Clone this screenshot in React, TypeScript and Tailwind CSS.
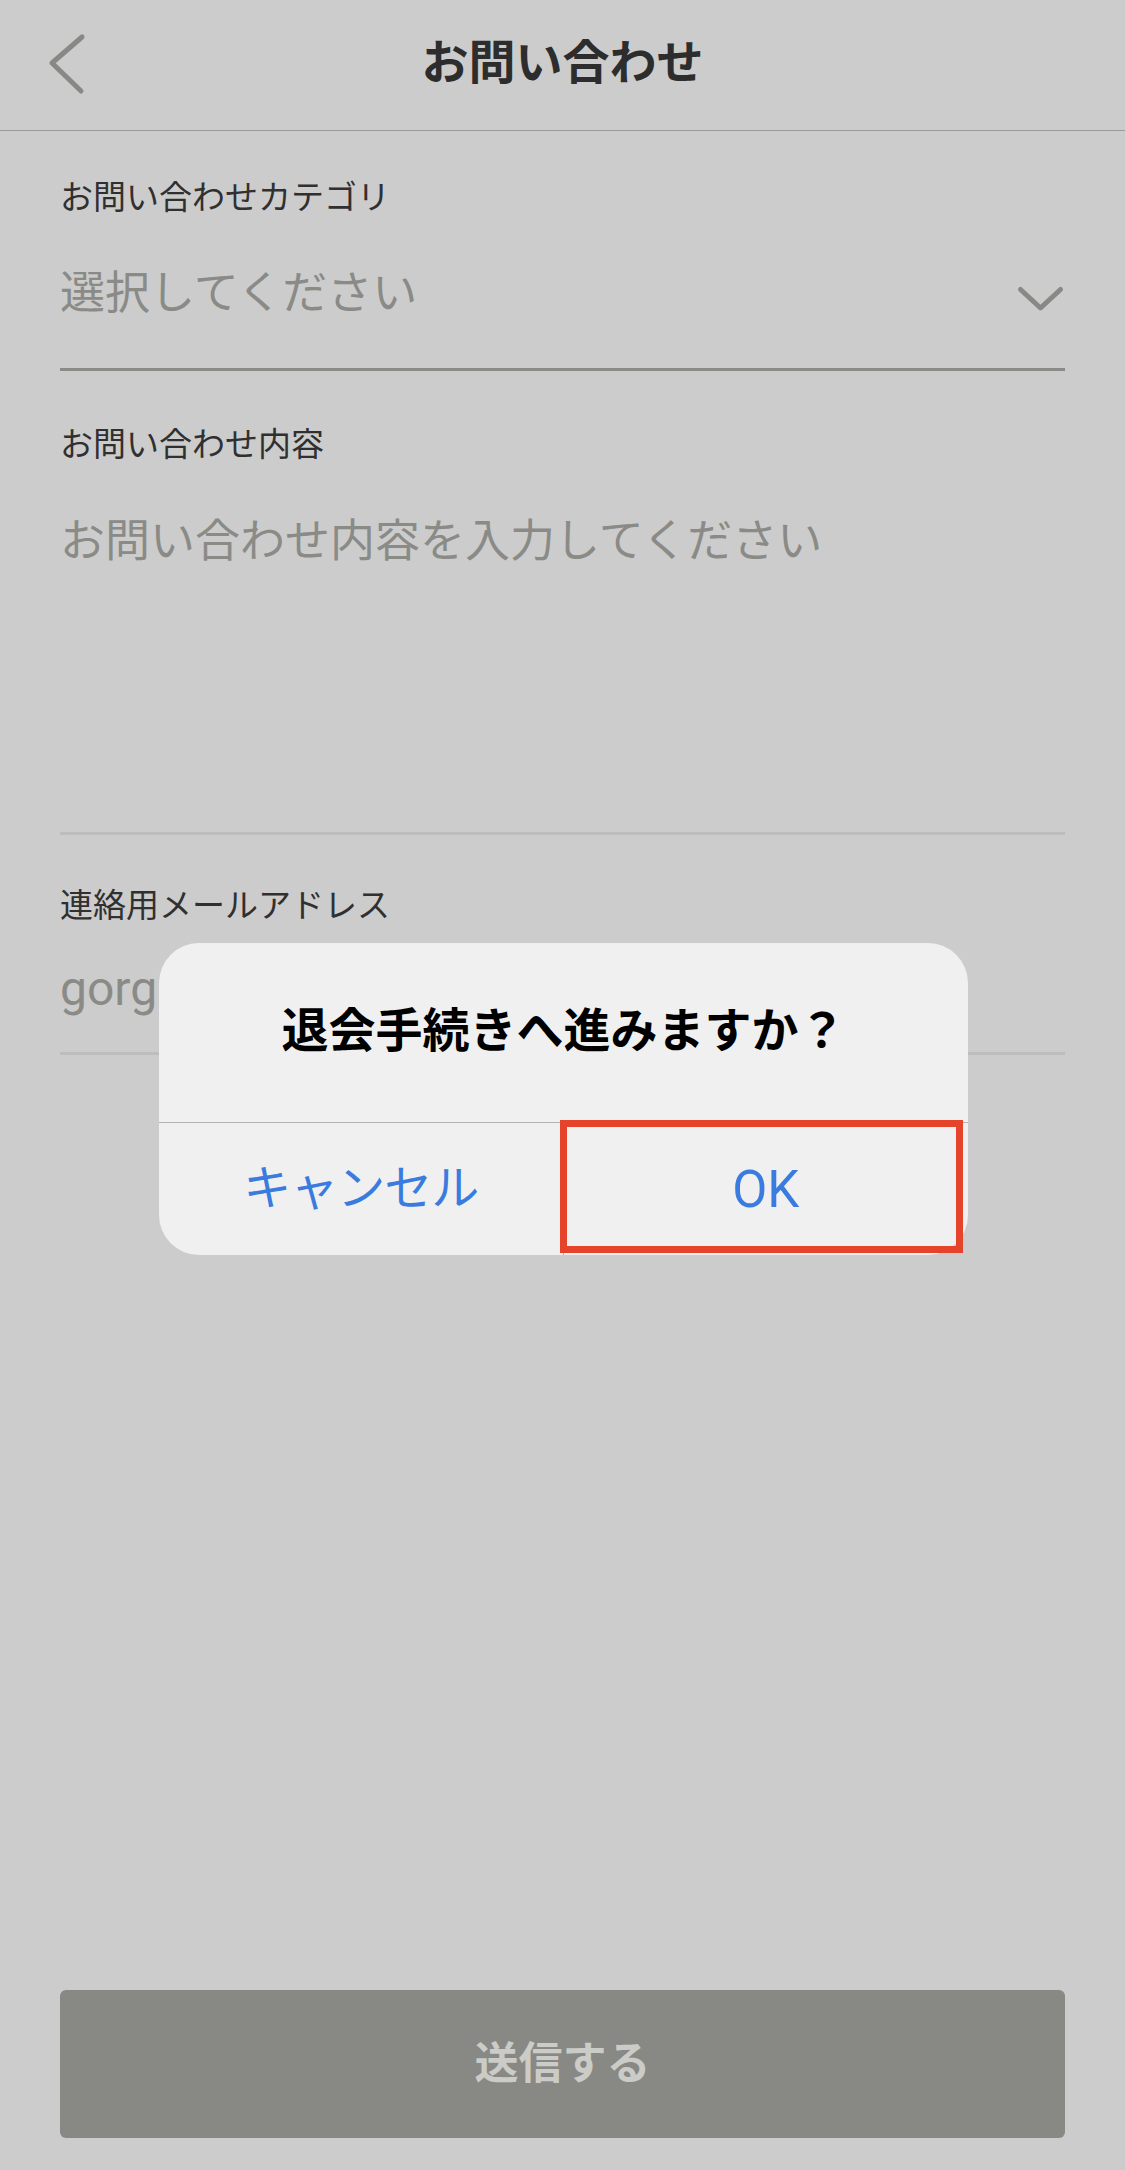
export default function App() {
  return (
    <div className="relative flex h-[2170px] w-[1125px] flex-col overflow-hidden bg-[#cccccc] font-[Roboto,'Noto_Sans_CJK_JP',sans-serif]">
      <header className="grid h-[131px] grid-cols-[1fr_auto_1fr] items-center border-b border-[#9b9b9b] px-[48px]">
        <svg width="40" height="64" viewBox="0 0 40 64" className="mb-[4px]">
          <polyline
            points="34,6 4,32 33,60"
            fill="none"
            stroke="#888884"
            strokeWidth="5"
            strokeLinecap="round"
            strokeLinejoin="round"
          />
        </svg>
        <h1 className="mb-[6px] text-[47px] font-bold leading-none text-[#2d2d2d]">お問い合わせ</h1>
        <div />
      </header>

      <div className="flex flex-col px-[60px]">
        <div className="pt-[47px]">
          <div className="h-[40px] text-[33px] leading-[40px] text-[#303030]">お問い合わせカテゴリ</div>
          <div className="flex h-[150px] items-center justify-between">
            <span className="text-[45px] leading-none text-[#8a8a86]">選択してください</span>
            <svg width="50" height="28" viewBox="0 0 50 28" className="mt-[12px]">
              <polyline
                points="5.5,4.5 25.5,23 45.5,4.5"
                fill="none"
                stroke="#888884"
                strokeWidth="5"
                strokeLinecap="round"
                strokeLinejoin="round"
              />
            </svg>
          </div>
          <div className="h-[3px] bg-[#8a8a86]" />
        </div>

        <div className="mt-[54px]">
          <div className="h-[40px] text-[33px] leading-[40px] text-[#303030]">お問い合わせ内容</div>
          <div className="h-[367px] pt-[47px]">
            <div className="h-[60px] text-[45px] leading-[60px] text-[#8a8a86]">お問い合わせ内容を入力してください</div>
          </div>
          <div className="h-[3px] bg-[#bdbdbd]" />
        </div>

        <div className="mt-[51px]">
          <div className="h-[40px] text-[33px] leading-[40px] text-[#303030]">連絡用メールアドレス</div>
          <div className="flex h-[126px] items-center">
            <span className="whitespace-nowrap text-[48px] leading-none text-[#8a8a86]">gorg</span>
          </div>
          <div className="h-[3px] bg-[#bdbdbd]" />
        </div>
      </div>

      <div className="flex-1" />

      <button className="mx-[60px] mb-[32px] flex h-[148px] items-center justify-center rounded-[6px] bg-[#888884] text-[44px] font-bold leading-none text-[#cbcbc7]">
        送信する
      </button>

      <div className="absolute left-[159px] top-[943px] flex h-[312px] w-[809px] flex-col overflow-hidden rounded-[40px] bg-[#f0f0f0]">
        <div className="flex h-[180px] items-center justify-center border-b border-[#b4b4b4] pb-[4px] text-[47px] font-bold leading-none text-black">
          退会手続きへ進みますか？
        </div>
        <div className="grid h-[132px] grid-cols-2">
          <div className="flex items-center justify-center border-r border-[#b4b4b4] text-[48px] leading-none tracking-[-1px] text-[#3a7bdf]">
            キャンセル
          </div>
          <div className="flex items-center justify-center text-[51px] leading-none text-[#3a7bdf]">OK</div>
        </div>
      </div>

      <div className="absolute left-[560px] top-[1120px] h-[133px] w-[403px] border-[7px] border-[#e5442b]" />
    </div>
  );
}
